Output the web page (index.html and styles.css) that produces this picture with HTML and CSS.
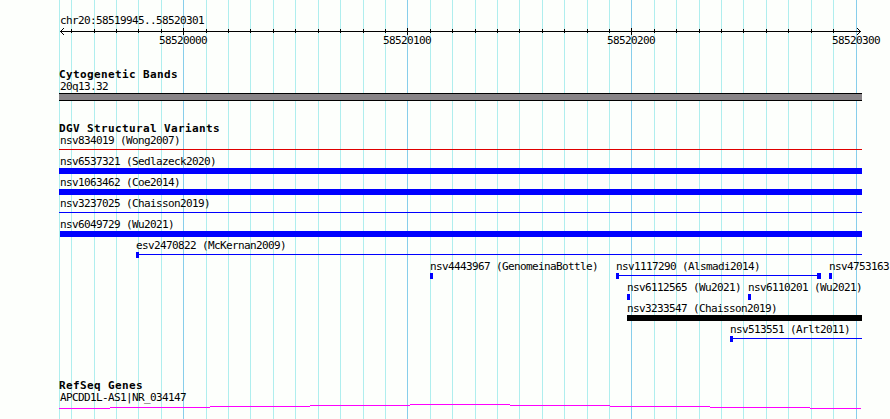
FILE: index.html
```html
<!DOCTYPE html>
<html>
<head>
<meta charset="utf-8">
<title>chr20:58519945..58520301</title>
<link rel="stylesheet" href="styles.css">
</head>

<body>
<div class="panel">
	<svg class="grid" width="890" height="419" shape-rendering="crispEdges">
		<path class="minor" d="M59.5 0V419M71.5 0V419M94.5 0V419M116.5 0V419M138.5 0V419M161.5 0V419M206.5 0V419M228.5 0V419M250.5 0V419M273.5 0V419M295.5 0V419M318.5 0V419M340.5 0V419M363.5 0V419M385.5 0V419M430.5 0V419M452.5 0V419M475.5 0V419M497.5 0V419M519.5 0V419M542.5 0V419M564.5 0V419M587.5 0V419M609.5 0V419M654.5 0V419M676.5 0V419M699.5 0V419M721.5 0V419M743.5 0V419M766.5 0V419M788.5 0V419M811.5 0V419M833.5 0V419"/>
		<path class="major" d="M183.5 0V419M407.5 0V419M631.5 0V419M856.5 0V419"/>
	</svg>

	<div class="tracks">
		<div class="label region">chr20:58519945..58520301</div>
		<svg class="ruler" width="831" height="8" shape-rendering="crispEdges">
			<path d="M1 3.5H802"/>
			<path d="M12.5 1V5M35.5 1V5M57.5 1V5M79.5 1V5M102.5 1V5M147.5 1V5M169.5 1V5M191.5 1V5M214.5 1V5M236.5 1V5M259.5 1V5M281.5 1V5M304.5 1V5M326.5 1V5M371.5 1V5M393.5 1V5M416.5 1V5M438.5 1V5M460.5 1V5M483.5 1V5M505.5 1V5M528.5 1V5M550.5 1V5M595.5 1V5M617.5 1V5M640.5 1V5M662.5 1V5M684.5 1V5M707.5 1V5M729.5 1V5M752.5 1V5M774.5 1V5"/>
			<path d="M124.5 0V7M348.5 0V7M572.5 0V7"/>
			<path d="M2 2.5H3M3 1.5H4M4 0.5H5M2 4.5H3M3 5.5H4M4 6.5H5"/>
			<path d="M800 2.5H801M799 1.5H800M798 0.5H799M800 4.5H801M799 5.5H800M798 6.5H799"/>
		</svg>
		<div class="scale">
			<span class="label">58520000</span>
			<span class="label">58520100</span>
			<span class="label">58520200</span>
			<span class="label last">58520300</span>
		</div>

		<h2 class="title">Cytogenetic Bands</h2>
		<div class="label">20q13.32</div>
		<div class="band"></div>

		<h2 class="title">DGV Structural Variants</h2>
		<div class="row">
			<div class="feature full"><div class="label">nsv834019 (Wong2007)</div><div class="line loss"></div></div>
		</div>
		<div class="row">
			<div class="feature full"><div class="label">nsv6537321 (Sedlazeck2020)</div><div class="bar"></div></div>
		</div>
		<div class="row">
			<div class="feature full"><div class="label">nsv1063462 (Coe2014)</div><div class="bar"></div></div>
		</div>
		<div class="row">
			<div class="feature full"><div class="label">nsv3237025 (Chaisson2019)</div><div class="line"></div></div>
		</div>
		<div class="row">
			<div class="feature full"><div class="label">nsv6049729 (Wu2021)</div><div class="bar inset"></div></div>
		</div>
		<div class="row">
			<div class="feature" style="margin-left:77px;width:726px"><div class="label">esv2470822 (McKernan2009)</div><div class="span"><i class="box"></i><i class="line"></i></div></div>
		</div>
		<div class="row">
			<div class="feature" style="margin-left:371px;width:186px"><div class="label">nsv4443967 (GenomeinaBottle)</div><div class="span"><i class="box"></i></div></div>
			<div class="feature" style="width:205px"><div class="label">nsv1117290 (Alsmadi2014)</div><div class="span"><i class="box"></i><i class="line"></i><i class="box wide"></i></div></div>
			<div class="feature" style="margin-left:8px"><div class="label">nsv4753163</div><div class="span"><i class="box"></i></div></div>
		</div>
		<div class="row">
			<div class="feature" style="margin-left:568px;width:121px"><div class="label">nsv6112565 (Wu2021)</div><div class="span"><i class="box"></i></div></div>
			<div class="feature"><div class="label">nsv6110201 (Wu2021)</div><div class="span"><i class="box"></i></div></div>
		</div>
		<div class="row">
			<div class="feature" style="margin-left:568px;width:235px"><div class="label">nsv3233547 (Chaisson2019)</div><div class="bar complex"></div></div>
		</div>
		<div class="row">
			<div class="feature" style="margin-left:671px;width:132px"><div class="label">nsv513551 (Arlt2011)</div><div class="span"><i class="box"></i><i class="line"></i></div></div>
		</div>

		<h2 class="title refseq">RefSeq Genes</h2>
		<div class="label">APCDD1L-AS1|NR_034147</div>
		<svg class="gene" width="803" height="6" shape-rendering="crispEdges">
			<path d="M0 4.5H51M51 3.5H151M151 2.5H251M251 1.5H351M351 0.5H451M451 1.5H551M551 2.5H651M651 3.5H751M751 4.5H802"/>
		</svg>
	</div>
</div>
</body>
</html>
```
FILE: styles.css
```css
body {
	margin: 0;
	background-color: #fdfffc;
	color: black;
	font-family: "DejaVu Sans Mono", monospace;
	font-size: 11px;
}
.panel {
	position: relative;
	width: 890px;
	height: 419px;
	overflow: hidden;
}
/* grid lines run behind all the tracks */
.grid {
	position: absolute;
	left: 0;
	top: 0;
}
.grid path, .ruler path, .gene path {
	fill: none;
	stroke-width: 1;
}
.grid .minor {
	stroke: #afeeee;
}
.grid .major {
	stroke: #87ceeb;
}
.tracks {
	position: relative;
	padding: 14px 0 0 59px;
}
.label {
	height: 13px;
	line-height: 13px;
	padding-left: 1px;
	letter-spacing: -0.62px;
	white-space: nowrap;
}
.title {
	margin: 21px 0 0;
	height: 12px;
	line-height: 13px;
	font-size: 11px;
	font-weight: bold;
	letter-spacing: 0.38px;
	white-space: nowrap;
}
.title.refseq {
	margin-top: 35px;
}
.region {
	height: 14px;
	line-height: 14px;
}
.ruler {
	display: block;
}
.ruler path {
	stroke: black;
}
.scale {
	display: flex;
	gap: 176px;
	margin: -2px 0 0 100px;
}
.scale .label {
	width: 48px;
	padding-left: 0;
	flex: none;
}
.scale .last {
	margin-left: 1px;
}
.band {
	box-sizing: border-box;
	width: 803px;
	height: 8px;
	background-color: #888487;
	border: solid black;
	border-width: 1px 0;
}
.row {
	display: flex;
	height: 21px;
}
.feature {
	flex: none;
}
.feature .label {
	padding-left: 0;
}
.full {
	width: 803px;
}
.full .label {
	padding-left: 1px;
}
.line {
	height: 1px;
	margin-top: 2px;
	background-color: blue;
}
.loss {
	background-color: #e00000;
}
.bar {
	height: 6px;
	background-color: blue;
}
.bar.inset {
	margin-left: 1px;
}
.complex {
	background-color: black;
}
.span {
	display: flex;
	height: 6px;
}
.span .line {
	flex: 1;
}
.box {
	width: 3px;
	height: 6px;
	background-color: blue;
}
.box.wide {
	width: 4px;
}
.gene {
	display: block;
}
.gene path {
	stroke: magenta;
}
```
